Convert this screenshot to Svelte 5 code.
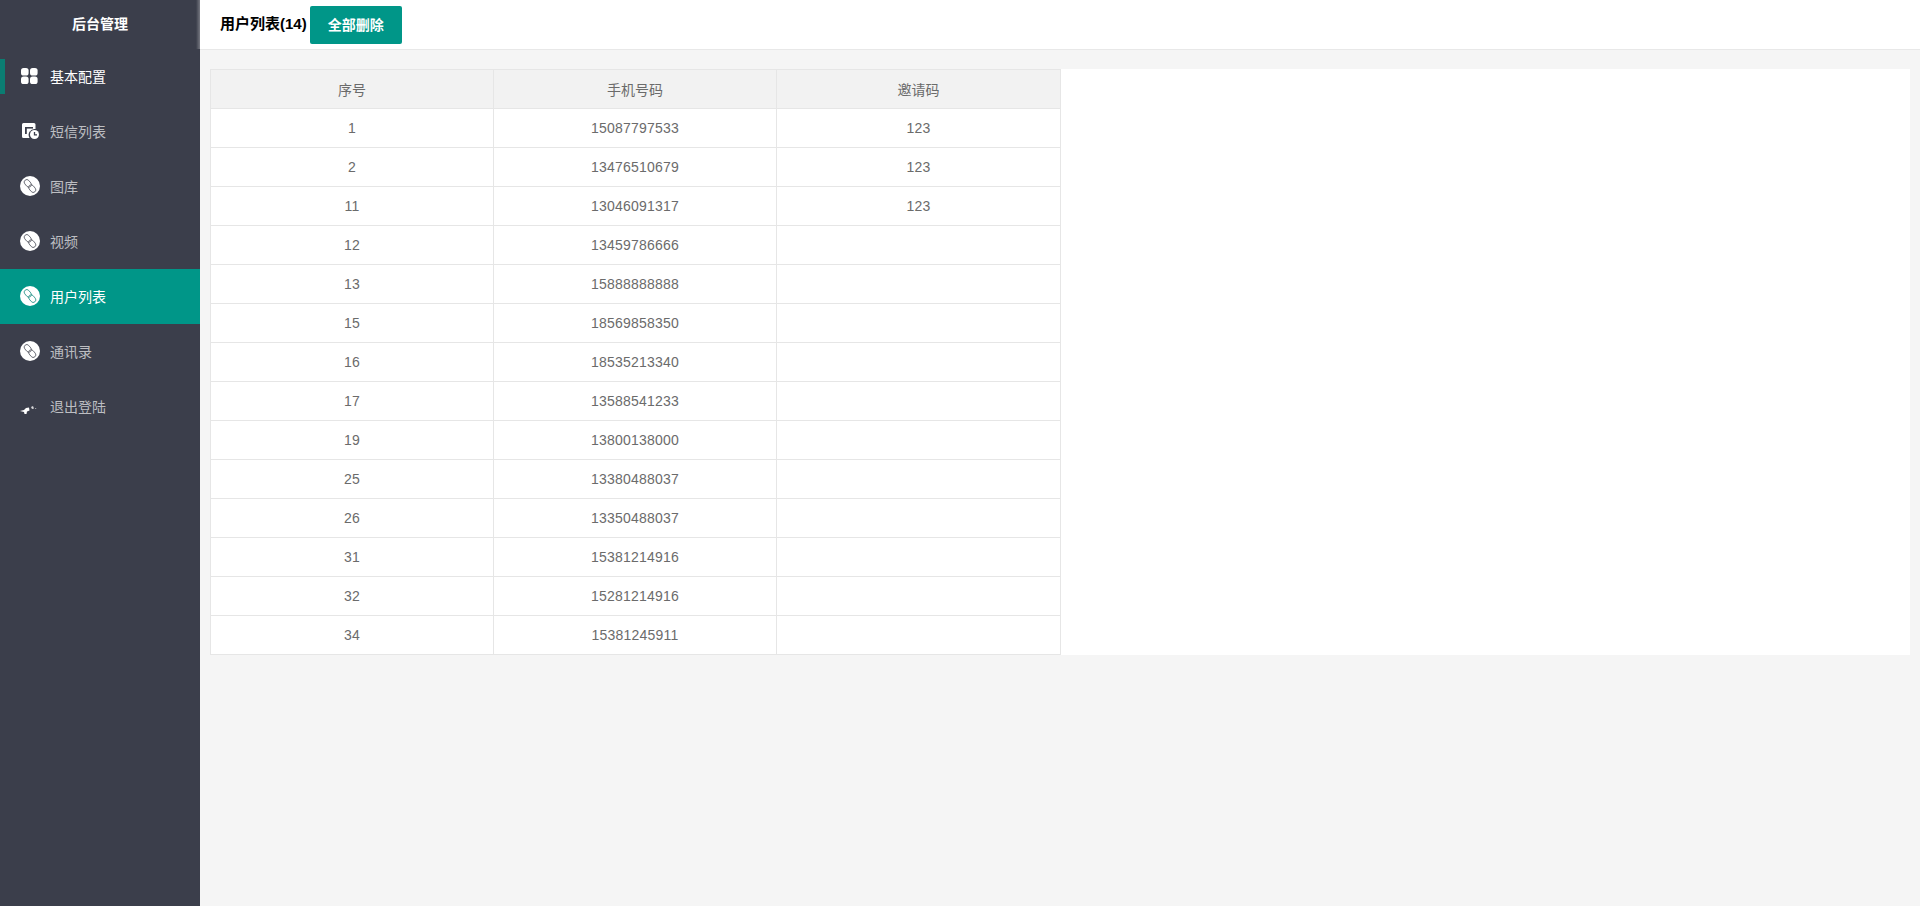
<script>
  const menu = [
    { label: "基本配置", icon: "grid", current: true },
    { label: "短信列表", icon: "sms" },
    { label: "图库", icon: "link" },
    { label: "视频", icon: "link" },
    { label: "用户列表", icon: "link", active: true },
    { label: "通讯录", icon: "link" },
    { label: "退出登陆", icon: "exit" }
  ];

  const users = [
    [1, "15087797533", "123"],
    [2, "13476510679", "123"],
    [11, "13046091317", "123"],
    [12, "13459786666", ""],
    [13, "15888888888", ""],
    [15, "18569858350", ""],
    [16, "18535213340", ""],
    [17, "13588541233", ""],
    [19, "13800138000", ""],
    [25, "13380488037", ""],
    [26, "13350488037", ""],
    [31, "15381214916", ""],
    [32, "15281214916", ""],
    [34, "15381245911", ""]
  ];
</script>

<div class="page">
  <aside class="side">
    <div class="logo">后台管理</div>
    <nav>
      {#each menu as item}
        <a class="item" class:current={item.current} class:active={item.active} href="#top">
          <span class="icon">
            {#if item.icon === "grid"}
              <svg width="20" height="20" viewBox="0 0 20 20">
                <rect x="1" y="2" width="7.6" height="7.6" rx="2.6" fill="#fff" />
                <rect x="10" y="2" width="7.6" height="7.6" rx="2.6" fill="#fff" />
                <rect x="1" y="10.4" width="7.6" height="7.6" rx="2.6" fill="#fff" />
                <rect x="10" y="10.4" width="7.6" height="7.6" rx="2.6" fill="#fff" />
              </svg>
            {:else if item.icon === "sms"}
              <svg width="20" height="20" viewBox="0 0 20 20">
                <path d="M2 3.5 Q2 2 3.5 2 H14 Q15.5 2 15.5 3.5 V8 A6 6 0 0 0 9.5 17 H3.5 Q2 17 2 15.5 Z" fill="#fff" />
                <rect x="5" y="6" width="8" height="1.6" fill="#3b3e4b" />
                <rect x="5" y="7" width="1.8" height="6" fill="#3b3e4b" />
                <circle cx="14.5" cy="13.5" r="4.5" fill="#fff" />
                <path d="M14.5 11 V13.8 H17" fill="none" stroke="#3b3e4b" stroke-width="1.3" />
              </svg>
            {:else if item.icon === "link"}
              <svg width="20" height="20" viewBox="0 0 20 20">
                <circle cx="10" cy="10" r="10" fill="#fff" />
                <g fill="none" stroke={item.active ? "#3a9d93" : "#666872"} stroke-width="0.9" transform="rotate(50 10 10)">
                  <rect x="2.4" y="7.4" width="8.4" height="5.2" rx="2.6" />
                  <rect x="9.2" y="7.4" width="8.4" height="5.2" rx="2.6" />
                </g>
              </svg>
            {:else}
              <svg width="20" height="20" viewBox="0 0 20 20">
                <path d="M0 15 L4 14 L6 12 L9 11.5 L9.5 14.5 L7 15.5 L6.5 18 L4.5 18 L4 16 Z" fill="#fff" />
                <path d="M11 11 L13 10 L14 12.5 L12 13 Z" fill="#d8d8da" />
                <rect x="15" y="12" width="1.2" height="1" fill="#9a9ba2" />
              </svg>
            {/if}
          </span>
          <span>{item.label}</span>
        </a>
      {/each}
    </nav>
  </aside>

  <main class="main">
    <header class="top">
      <span class="title">用户列表(14)</span>
      <button class="del">全部删除</button>
    </header>
    <section class="content">
      <div class="panel">
        <table>
          <thead>
            <tr><th>序号</th><th>手机号码</th><th>邀请码</th></tr>
          </thead>
          <tbody>
            {#each users as row}
              <tr>
                <td>{row[0]}</td>
                <td>{row[1]}</td>
                <td>{row[2]}</td>
              </tr>
            {/each}
          </tbody>
        </table>
      </div>
    </section>
  </main>
</div>

<style>
  :global(body) {
    margin: 0;
    background: #f5f5f5;
    font-family: "Liberation Sans", "Noto Sans CJK SC", sans-serif;
    font-size: 14px;
  }

  .page {
    display: flex;
    height: 906px;
    overflow: hidden;
  }

  .side {
    width: 200px;
    flex: none;
    background: #3b3e4b;
  }

  .logo {
    height: 49px;
    line-height: 49px;
    text-align: center;
    color: #fff;
    font-weight: bold;
    background: linear-gradient(to right, transparent 196px, rgba(255, 255, 255, 0.3));
  }

  .item {
    display: flex;
    align-items: center;
    height: 55px;
    padding: 0 0 2px 20px;
    box-sizing: border-box;
    color: #bdbec2;
    text-decoration: none;
    position: relative;
  }

  .item.current {
    color: #fff;
  }

  .item.current::before {
    content: "";
    position: absolute;
    left: 0;
    top: 10px;
    width: 5px;
    height: 35px;
    background: #0b7d72;
  }

  .item.active {
    background: #009688;
    color: #fff;
  }

  .icon {
    width: 20px;
    height: 20px;
    margin-right: 10px;
    display: block;
  }

  .icon svg {
    display: block;
  }

  .main {
    flex: 1;
    min-width: 0;
  }

  .top {
    height: 49px;
    background: #fff;
    border-bottom: 1px solid #e8e8e8;
    display: flex;
    align-items: center;
    padding-left: 20px;
  }

  .title {
    font-size: 15px;
    font-weight: bold;
    color: #000;
    margin-top: -4px;
  }

  .del {
    width: 92px;
    height: 38px;
    margin: 1px 0 0 3px;
    padding: 0 0 2px;
    border: none;
    border-radius: 2px;
    background: #009688;
    color: #fff;
    font: bold 14px "Liberation Sans", "Noto Sans CJK SC", sans-serif;
  }

  .content {
    padding: 19px 10px 0;
  }

  .panel {
    background: #fff;
  }

  table {
    width: 851px;
    border-collapse: collapse;
    table-layout: fixed;
    color: #6b6b6b;
  }

  th,
  td {
    height: 39px;
    padding: 0;
    box-sizing: border-box;
    border: 1px solid #e6e6e6;
    text-align: center;
    font-weight: normal;
  }

  th:nth-child(-n + 2) {
    width: 283px;
  }

  td {
    letter-spacing: 0.22px;
  }

  th {
    background: #f2f2f2;
  }
</style>
